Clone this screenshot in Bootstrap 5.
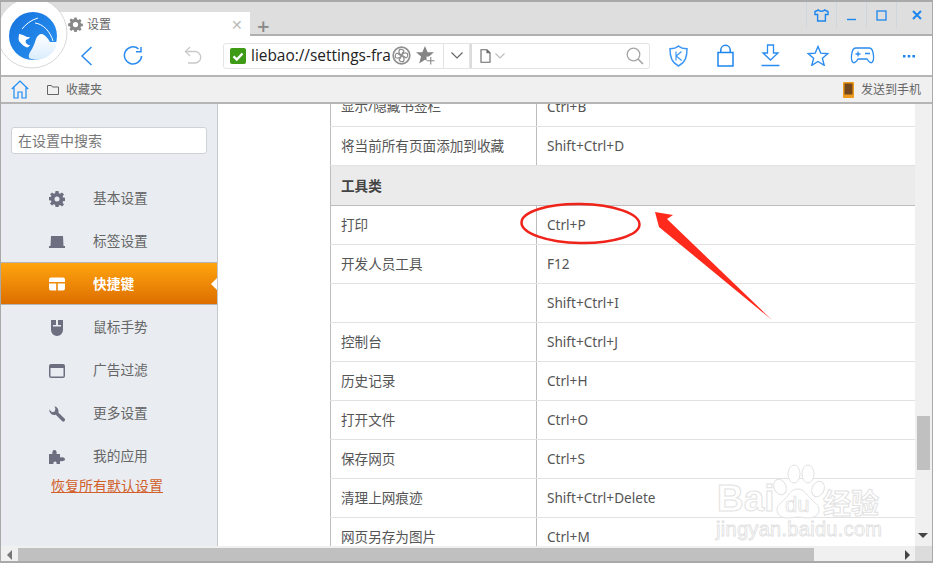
<!doctype html>
<html lang="zh-CN">
<head>
<meta charset="utf-8">
<title>设置</title>
<link href="https://cdn.jsdelivr.net/npm/bootstrap@5.3.0/dist/css/bootstrap.min.css" rel="stylesheet">
<style>
html,body{height:100%;overflow:hidden}
body{font-family:"Noto Sans","Noto Sans CJK SC",sans-serif;font-size:14px;color:#555;background:#fff}
.shell{width:933px;height:563px;border:1px solid #a9a9a9;border-width:2px 1px 2px 1px;position:relative;overflow:hidden}
.titlebar{height:34px;background:#dedede;border-bottom:2px solid #b0b0b0;padding-left:59px}
.tabitem{width:190px;height:25px;margin-top:10px;background:#fff;color:#666;font-size:12px;padding-left:8px;margin-bottom:-2px;position:relative}
.tabitem svg{margin-right:4px}
.tabx{margin-left:auto;margin-right:7px;color:#bbb;font-size:14px;line-height:1}
.tabadd{color:#888;font-size:22px;font-weight:500;line-height:1;margin:12px 0 0 7px}
.winbtns{margin-left:auto;height:26px}
.winbtn{width:30px;height:26px;border-left:1px solid #cfd6de}
.winbtn:last-child{width:36px;padding-left:4px}
.toolbar{height:41px;background:#fff;border-bottom:2px solid #b5b5b5}
.navback{margin-left:79px}
.navreload{margin-left:30px}
.navundo{margin-left:41px}
.addr{margin-left:21px;width:247px;height:26px;border:1px solid #e4e4e4;border-radius:3px 0 0 3px;font-size:16px;color:#222;line-height:24px;padding-left:6px;white-space:nowrap;overflow:hidden}
.addr-text{width:141px;overflow:hidden;margin-left:5px;font-family:"Open Sans",sans-serif;font-size:15.4px}
.addr-star{margin-left:5px}
.addr-drop{margin-left:auto;width:26px;height:24px;border-left:1px solid #e2e2e2;flex:none}
.searchbox{width:180px;height:26px;border:1px solid #e4e4e4;border-left:2px solid #dcdcdc;border-radius:0 3px 3px 0;padding:0 5px 0 8px}
.tool-k{margin-left:19px}
.tool-lock{margin-left:29px}
.tool-dl{margin-left:27px}
.tool-star{margin-left:27px}
.tool-pad{margin-left:21px}
.tool-more{margin-left:28px}
.bookbar{height:27px;background:#f0f0f0;border-bottom:2px solid #b5b5b5;font-size:12px;color:#666;padding-left:10px}
.bookfolder{margin-left:18px;margin-right:7px}
.sendphone{margin-left:auto;margin-right:7px}
.sendtext{margin-right:11px}
.mainarea{height:442px;min-height:0}
.sidepanel{width:217px;flex:none;background:#e9edf2;border-right:1px solid #c4c8cc;position:relative}
.sidesearch{margin:23px 0 0 10px;width:196px;height:27px;border:1px solid #cfd2d6;border-radius:3px;background:#fff;font-size:14px;color:#777;padding:0 6px;line-height:25px}
.sidemenu{margin-top:22px}
.sideitem{height:43px;padding-left:48px;color:#666;font-size:13.7px;padding-top:2px}
.sideitem svg{width:16px;height:16px;margin-right:28px;flex:none}
.sideitem.on{background:linear-gradient(#ffa50f,#dd6e00);color:#fff;font-weight:700;border-top:1px solid #b4b4b4;border-bottom:1px solid #b4b4b4;position:relative;padding-top:1px}
.sideitem.on::after{content:"";position:absolute;right:0;top:15px;border:6px solid transparent;border-left:0;border-right:6px solid #fff}
.restore{display:block;margin:-1px 0 0 50px;color:#d2602a;font-size:14px;text-decoration:underline;line-height:20px}
.contentpane{flex:1;min-width:0;overflow:hidden;padding-left:112px}
.sktable{width:586px;margin-top:-17px;border-collapse:collapse;border-left:1px solid #bdbdbd;table-layout:fixed}
.sktable td{height:39px;padding:0 10px;border-bottom:1px solid #e2e2e2;font-size:13.6px;color:#555;vertical-align:middle;line-height:1}
.sktable td.keycol{border-left:1px solid #bdbdbd;font-size:13.6px;padding-top:1px}
.sktable tr.groupline td{background:#ebebeb;font-weight:700;color:#444;height:40px;padding-top:1px;border-top:1px solid #c6c6c6;border-bottom:1px solid #bdbdbd}
.vscroll{width:17px;flex:none;background:#f0f0f0;position:relative;padding:0 2px}
.vthumb{position:absolute;left:2px;right:2px;top:312px;height:54px;background:#c0c0c0}
.vdown{position:absolute;left:3px;bottom:8px;border:5px solid transparent;border-top:5px solid #444;border-bottom:0}
.hscroll{height:15px;background:#f0f0f0;padding:2px 0}
.hleft{width:17px;flex:none;height:100%}
.hleft::before{content:"";display:block;margin:2px 0 0 6px;width:0;border:5px solid transparent;border-right:5px solid #777;border-left:0}
.hthumb{width:796px;height:13px;background:#c0c0c0}
.hright{margin-left:auto;margin-right:5px;border:5px solid transparent;border-left:5px solid #444;border-right:0;margin-top:2px;height:0}
.hcorner{width:17px;background:#dcdcdc;height:15px;margin-top:-2px}
.logomark{position:absolute;left:-1px;top:-2px;width:70px;height:70px}
.markup{position:absolute;left:510px;top:195px;width:290px;height:130px;pointer-events:none}
.watermark{position:absolute;left:711px;top:456px;width:180px;height:96px;pointer-events:none}
.wm-main{position:absolute;left:5px;top:21px;font:700 37px/40px "Liberation Sans",sans-serif;color:#fff;-webkit-text-stroke:1px #e2e2e2}
.wm-du{position:absolute;left:73px;top:34px;font:400 22px "Liberation Sans",sans-serif;color:#fff;-webkit-text-stroke:.7px #dcdcdc}
.wm-cn{position:absolute;left:111px;top:28px;font:700 28px/32px "Noto Sans CJK SC",sans-serif;color:#fff;-webkit-text-stroke:1px #e2e2e2;white-space:nowrap}
.wm-url{position:absolute;left:4px;top:60px;font:400 20px "Liberation Sans",sans-serif;color:#fff;-webkit-text-stroke:.8px #e0e0e0;white-space:nowrap;letter-spacing:.3px}
</style>
</head>
<body>
<div class="shell d-flex flex-column">

  <div class="titlebar d-flex align-items-start flex-none">
    <div class="tabitem d-flex align-items-center">
      <svg width="15" height="15" viewBox="0 0 16 16"><path fill="#888" fill-rule="evenodd" d="M6.800.5h2.400l.4 2 1.300.6 1.800-1.100 1.700 1.700-1.100 1.800.6 1.300 2 .4v2.400l-2 .4-.6 1.300 1.100 1.800-1.700 1.700-1.800-1.100-1.300.6-.4 2H6.800l-.4-2-1.300-.6-1.800 1.100-1.700-1.700 1.100-1.800-.6-1.300-2-.4V6.800l2-.4.6-1.300L1.600 3.300l1.700-1.700 1.800 1.100 1.300-.6zM8 5.200a2.800 2.800 0 1 0 0 5.600 2.800 2.800 0 0 0 0-5.600z"/></svg>
      <span>设置</span>
      <span class="tabx">✕</span>
    </div>
    <span class="tabadd">+</span>
    <div class="winbtns d-flex">
      <div class="winbtn d-flex align-items-center justify-content-center"><svg width="15" height="13" viewBox="0 0 15 13" fill="none" stroke="#1c86ee" stroke-width="1.4"><path d="M4.500 1 1 2.500v3h2.600V12h7.800V5.500H14v-3L10.500 1C9.800 2.600 5.200 2.600 4.500 1z"/></svg></div>
      <div class="winbtn d-flex align-items-center justify-content-center"><svg width="11" height="12" viewBox="0 0 11 12"><path stroke="#1c86ee" stroke-width="1.4" d="M1 10.500h9"/></svg></div>
      <div class="winbtn d-flex align-items-center justify-content-center"><svg width="11" height="11" viewBox="0 0 11 11" fill="none"><rect x="1" y="1" width="9" height="9" stroke="#1c86ee" stroke-width="1.3"/></svg></div>
      <div class="winbtn d-flex align-items-center justify-content-center"><svg width="10" height="10" viewBox="0 0 10 10"><path stroke="#1c86ee" stroke-width="2" d="M1 1l8 8M9 1 1 9"/></svg></div>
    </div>
  </div>

  <div class="toolbar d-flex align-items-center">
    <svg class="navback" width="13" height="20" viewBox="0 0 13 20" fill="none" stroke="#2a8cf0" stroke-width="1.5"><path d="M11.500 1 2 10l9.500 9"/></svg>
    <svg class="navreload" width="20" height="20" viewBox="0 0 20 20" fill="none" stroke="#2a8cf0" stroke-width="1.5"><path d="M15.500 2.800A8.600 8.600 0 1 0 18.600 10"/><path d="M13 5.800h5V1"/></svg>
    <svg class="navundo" width="18" height="19" viewBox="0 0 18 19" fill="none" stroke="#c9c9c9" stroke-width="1.3"><path d="M6 1 1.500 5.500 6 10"/><path d="M1.500 5.500H11a5.700 5.700 0 0 1 0 11.500H4"/></svg>
    <div class="addr d-flex align-items-center">
      <svg width="16" height="16" viewBox="0 0 16 16" class="flex-shrink-0"><rect width="16" height="16" rx="2" fill="#3f9a16"/><path d="M3.500 8.300 6.800 11.500 12.500 5.500" fill="none" stroke="#fff" stroke-width="2.400"/></svg>
      <span class="addr-text flex-shrink-0">liebao://settings-fra</span>
      <svg width="19" height="19" viewBox="0 0 19 19" class="flex-shrink-0" fill="none" stroke="#8f8f8f"><circle cx="9.500" cy="9.500" r="8.300" stroke-width="1.700"/><path stroke-width="1.300" d="M9.500 9.500C7 8 6.500 5.500 7.500 3.500c2-.5 4 .3 4.300 1.500-.5 1.800-2 2-2.300 4.500zM9.500 9.500c1.500-2.500 4-3 6-2 .5 2-.3 4-1.500 4.300-1.800-.5-2-2-4.500-2.300zM9.500 9.500c2.500 1.500 3 4 2 6-2 .5-4-.3-4.300-1.500.5-1.800 2-2 2.300-4.500zM9.500 9.500c-1.500 2.500-4 3-6 2-.5-2 .3-4 1.500-4.300 1.800.5 2 2 4.500 2.300z"/></svg>
      <svg width="19" height="19" viewBox="0 0 18 18" class="flex-shrink-0 addr-star"><path fill="#858585" d="M8.500 0 11 6h6l-4.700 4 1.700 6.500-5.500-3.500L3 16.500 4.800 10 0 6h6z"/><rect x="10" y="10" width="8" height="8" fill="#fff"/><path stroke="#858585" d="M14 10.500v7M10.500 14h7"/></svg>
      <div class="addr-drop d-flex align-items-center justify-content-center"><svg width="12" height="7" viewBox="0 0 12 7" fill="none" stroke="#666" stroke-width="1.200"><path d="M.5.5 6 6l5.500-5.500"/></svg></div>
    </div>
    <div class="searchbox d-flex align-items-center">
      <svg width="11" height="14" viewBox="0 0 11 14" fill="none" stroke="#666" stroke-width="1.100"><path d="M1 .8h6l3 3v9.500H1zM7 .8v3h3"/></svg>
      <svg class="ms-1" width="10" height="6" viewBox="0 0 10 6" fill="none" stroke="#bbb" stroke-width="1.100"><path d="M.5.5 5 5 9.500.5"/></svg>
      <svg class="ms-auto" width="18" height="18" viewBox="0 0 18 18" fill="none" stroke="#a5a5a5" stroke-width="1.300"><circle cx="7.500" cy="7.500" r="6.300"/><path stroke-width="1.600" d="m12 12 5 5"/></svg>
    </div>
    <svg class="tool-k" width="19" height="22" viewBox="0 0 19 22" fill="none" stroke="#3d97f5" stroke-width="1.200"><path stroke-width="1.500" d="M9.500 1c2 1.800 5 2.700 8.500 2.800 0 8-1.500 13.500-8.500 17.200C2.500 17.300 1 11.800 1 3.800 4.500 3.700 7.500 2.800 9.500 1z"/><path d="M7 6.500v9M12.500 6.500 7.200 11l5.500 4.500"/></svg>
    <svg class="tool-lock" width="17" height="23" viewBox="0 0 17 23" fill="none" stroke="#1c86ee" stroke-width="1.500"><rect x="1" y="8.500" width="15" height="13.500"/><path d="M3.800 8.500V6a4.700 4.700 0 0 1 9.400 0v2.500"/></svg>
    <svg class="tool-dl" width="19" height="23" viewBox="0 0 19 23" fill="none" stroke="#2a8cf0" stroke-width="1.300"><path d="M6.500 1h6v8h4.500l-7.500 7L2 9h4.500z"/><path stroke-width="1.500" d="M.5 21.500h18"/></svg>
    <svg class="tool-star" width="22" height="21" viewBox="0 0 22 21" fill="none" stroke="#2a8cf0" stroke-width="1.400"><path d="m11 1.500 2.800 6.700 7 .5-5.400 4.600 1.800 7L11 16.500 4.800 20.300l1.800-7L1.200 8.700l7-.5z"/></svg>
    <svg class="tool-pad" width="25" height="17" viewBox="0 0 25 17" fill="none" stroke="#2a8cf0" stroke-width="1.300"><path d="M6 1h13c2.500 0 3.500 2 4 4.500.6 3 1.500 8-1 10-2 1-3.500-1-5-3.500H8c-1.500 2.500-3 4.500-5 3.500-2.500-2-1.600-7-1-10C2.500 3 3.500 1 6 1z"/><path d="M5.500 7h5M8 4.500v5M15 6.500h5"/></svg>
    <svg class="tool-more" width="12" height="4" viewBox="0 0 12 4"><path fill="#1c86ee" d="M0 1h2.500v2.500H0zM4.700 1h2.500v2.500H4.700zM9.400 1H12v2.500H9.400z"/></svg>
  </div>

  <div class="bookbar d-flex align-items-center">
    <svg width="18" height="19" viewBox="0 0 18 19" fill="none" stroke="#1c8cf5" stroke-width="1.200"><path d="M.8 9 9 1l8.200 8M3 7.500V18h4v-6h4v6h4V7.500"/></svg>
    <svg class="bookfolder" width="12" height="10" viewBox="0 0 12 10" fill="none" stroke="#666"><path d="M.5 9.500V.5h4l1 1.500h6v7.500z"/></svg>
    <span>收藏夹</span>
    <svg class="sendphone" width="11" height="16" viewBox="0 0 11 16"><rect width="11" height="16" rx="1" fill="#ee9a1c"/><rect x="1.500" y="1.500" width="8" height="11" fill="#74481c"/></svg>
    <span class="sendtext">发送到手机</span>
  </div>

  <div class="mainarea d-flex">
    <div class="sidepanel">
      <div class="sidesearch">在设置中搜索</div>
      <div class="sidemenu d-flex flex-column">
        <div class="sideitem d-flex align-items-center"><svg viewBox="0 0 16 16"><path fill="#6d6f80" fill-rule="evenodd" d="M6.500 0h3l.4 2.300 1.200.5L13 1.400l2 2-1.400 1.900.5 1.200 2.300.4v3l-2.300.4-.5 1.200 1.400 1.900-2 2-1.900-1.400-1.200.5L9.500 16h-3l-.4-2.300-1.200-.5L3 14.600l-2-2 1.400-1.900-.5-1.200L-.4 9.100v-3l2.300-.4.500-1.200L1 3.400l2-2 1.900 1.400 1.200-.5zM8 5.500a2.500 2.500 0 1 0 0 5 2.500 2.500 0 0 0 0-5z"/></svg><span>基本设置</span></div>
        <div class="sideitem d-flex align-items-center"><svg viewBox="0 0 16 16"><path fill="#6d6f80" d="M2 2h12l.5 10H16v2H0v-2h1.500z"/></svg><span>标签设置</span></div>
        <div class="sideitem on d-flex align-items-center"><svg viewBox="0 0 16 16"><path fill="#fff" d="M2 1.500h12a2 2 0 0 1 2 2V6H0V3.500a2 2 0 0 1 2-2zM0 7.500h7.200v7H2a2 2 0 0 1-2-2zM8.800 7.500H16v5a2 2 0 0 1-2 2H8.800z"/></svg><span>快捷键</span></div>
        <div class="sideitem d-flex align-items-center"><svg viewBox="0 0 16 16"><path fill="#6d6f80" fill-rule="evenodd" d="M2 0h5v5H4v1.500h8V5H9V0h5v10a6 6 0 0 1-12 0z"/></svg><span>鼠标手势</span></div>
        <div class="sideitem d-flex align-items-center"><svg viewBox="0 0 16 16"><path fill="#6d6f80" fill-rule="evenodd" d="M2 1h12a2 2 0 0 1 2 2v10a2 2 0 0 1-2 2H2a2 2 0 0 1-2-2V3a2 2 0 0 1 2-2zm-.500 4v8.500h13V5z"/></svg><span>广告过滤</span></div>
        <div class="sideitem d-flex align-items-center"><svg viewBox="0 0 16 16"><path fill="#6d6f80" d="M5.500.200a5 5 0 0 1 3.800 6.200l6.200 6.100a1.700 1.700 0 0 1-2.500 2.500L6.800 8.800A5 5 0 0 1 .300 3.600L3 6.200l2.800-.6.600-2.800z"/></svg><span>更多设置</span></div>
        <div class="sideitem d-flex align-items-center"><svg viewBox="0 0 16 16"><path fill="#6d6f80" d="M0 5h3.500C3 3.500 3.500 1 5.500 1s2.500 2.500 2 4H11v3.500c1.500-.5 5-.3 5 1.800s-3.500 2.200-5 1.700V15H7.500c.5-1.500-.3-2.500-1.500-2.500S4 13.500 4.500 15H0z"/></svg><span>我的应用</span></div>
      </div>
      <a class="restore" href="#">恢复所有默认设置</a>
    </div>

    <div class="contentpane">
      <table class="sktable">
        <colgroup><col style="width:206px"><col></colgroup>
        <tbody>
          <tr><td>显示/隐藏书签栏</td><td class="keycol">Ctrl+B</td></tr>
          <tr><td>将当前所有页面添加到收藏</td><td class="keycol">Shift+Ctrl+D</td></tr>
          <tr class="groupline"><td colspan="2">工具类</td></tr>
          <tr><td>打印</td><td class="keycol">Ctrl+P</td></tr>
          <tr><td>开发人员工具</td><td class="keycol">F12</td></tr>
          <tr><td></td><td class="keycol">Shift+Ctrl+I</td></tr>
          <tr><td>控制台</td><td class="keycol">Shift+Ctrl+J</td></tr>
          <tr><td>历史记录</td><td class="keycol">Ctrl+H</td></tr>
          <tr><td>打开文件</td><td class="keycol">Ctrl+O</td></tr>
          <tr><td>保存网页</td><td class="keycol">Ctrl+S</td></tr>
          <tr><td>清理上网痕迹</td><td class="keycol">Shift+Ctrl+Delete</td></tr>
          <tr><td>网页另存为图片</td><td class="keycol">Ctrl+M</td></tr>
        </tbody>
      </table>
    </div>
    <div class="vscroll"><div class="vthumb"></div><div class="vdown"></div></div>
  </div>

  <div class="hscroll d-flex">
    <div class="hleft"></div>
    <div class="hthumb"></div>
    <div class="hright"></div>
    <div class="hcorner"></div>
  </div>

  <svg class="logomark" viewBox="0 0 70 70">
    <defs><linearGradient id="lg" x1="0" y1="0" x2="1" y2="1"><stop offset="0" stop-color="#1673de"/><stop offset="1" stop-color="#2a93f0"/></linearGradient><linearGradient id="lb" x1="0" y1="0" x2="0" y2="1"><stop offset="0" stop-color="#fff"/><stop offset="1" stop-color="#d9ecfc"/></linearGradient></defs>
    <circle cx="32" cy="33" r="35" fill="#fff" stroke="#d8d8d8"/>
    <circle cx="33" cy="36" r="24" fill="url(#lg)"/>
    <path fill="url(#lb)" d="M29 58c-1-3 1-6 3-9 2-4 3-7 4-10 1-3 3-5 6-5 3 1 6 4 8 8l6 0c.5 3 0 5-1 7-3 5-8 9-14 10-4 1-8 1-12-1z"/>
    <path fill="none" stroke="#fff" stroke-width="1" d="M35 23c8 1 15 8 18 18M22 29c4-5 9-9 16-11"/>
    <path fill="#fff" d="M19 34c2 0 4 1 6 2 1 1 3 1 5 1-1 2-3 2-4 3-1 2 0 3 1 4 1 1 2 1 3 1-1 2-3 3-4 2-3-1-5-4-7-6-1-2 0-5 0-7z"/>
  </svg>

  <svg class="markup" viewBox="0 0 290 130">
    <ellipse cx="69.500" cy="26.500" rx="59" ry="19.500" fill="none" stroke="#f0231a" stroke-width="2.500" transform="rotate(1 69.500 26.500)"/>
    <path fill="#ff2a1c" d="M144 15 162 18 156 22 261 123 148 30z"/>
  </svg>

  <div class="watermark">
    <svg width="180" height="96" viewBox="0 0 180 96" class="position-absolute top-0 start-0" fill="#fff" stroke="#e2e2e2">
      <ellipse cx="68" cy="29" rx="6" ry="8" transform="rotate(-25 68 29)"/>
      <ellipse cx="82" cy="16" rx="6" ry="9"/>
      <ellipse cx="96" cy="16" rx="6" ry="9"/>
      <ellipse cx="106" cy="31" rx="6" ry="8" transform="rotate(25 106 31)"/>
      <path d="M86 31c6 0 9 6 13 10s8 6 8 11c0 6-6 8-11 8-4 0-6-1-10-1s-6 1-10 1c-5 0-11-2-11-8 0-5 4-7 8-11s6-10 13-10z"/>
    </svg>
    <span class="wm-main">Bai</span>
    <span class="wm-du">du</span>
    <span class="wm-cn">经验</span>
    <span class="wm-url">jingyan.baidu.com</span>
  </div>
</div>
<script src="https://cdn.jsdelivr.net/npm/bootstrap@5.3.0/dist/js/bootstrap.bundle.min.js"></script>
</body>
</html>
